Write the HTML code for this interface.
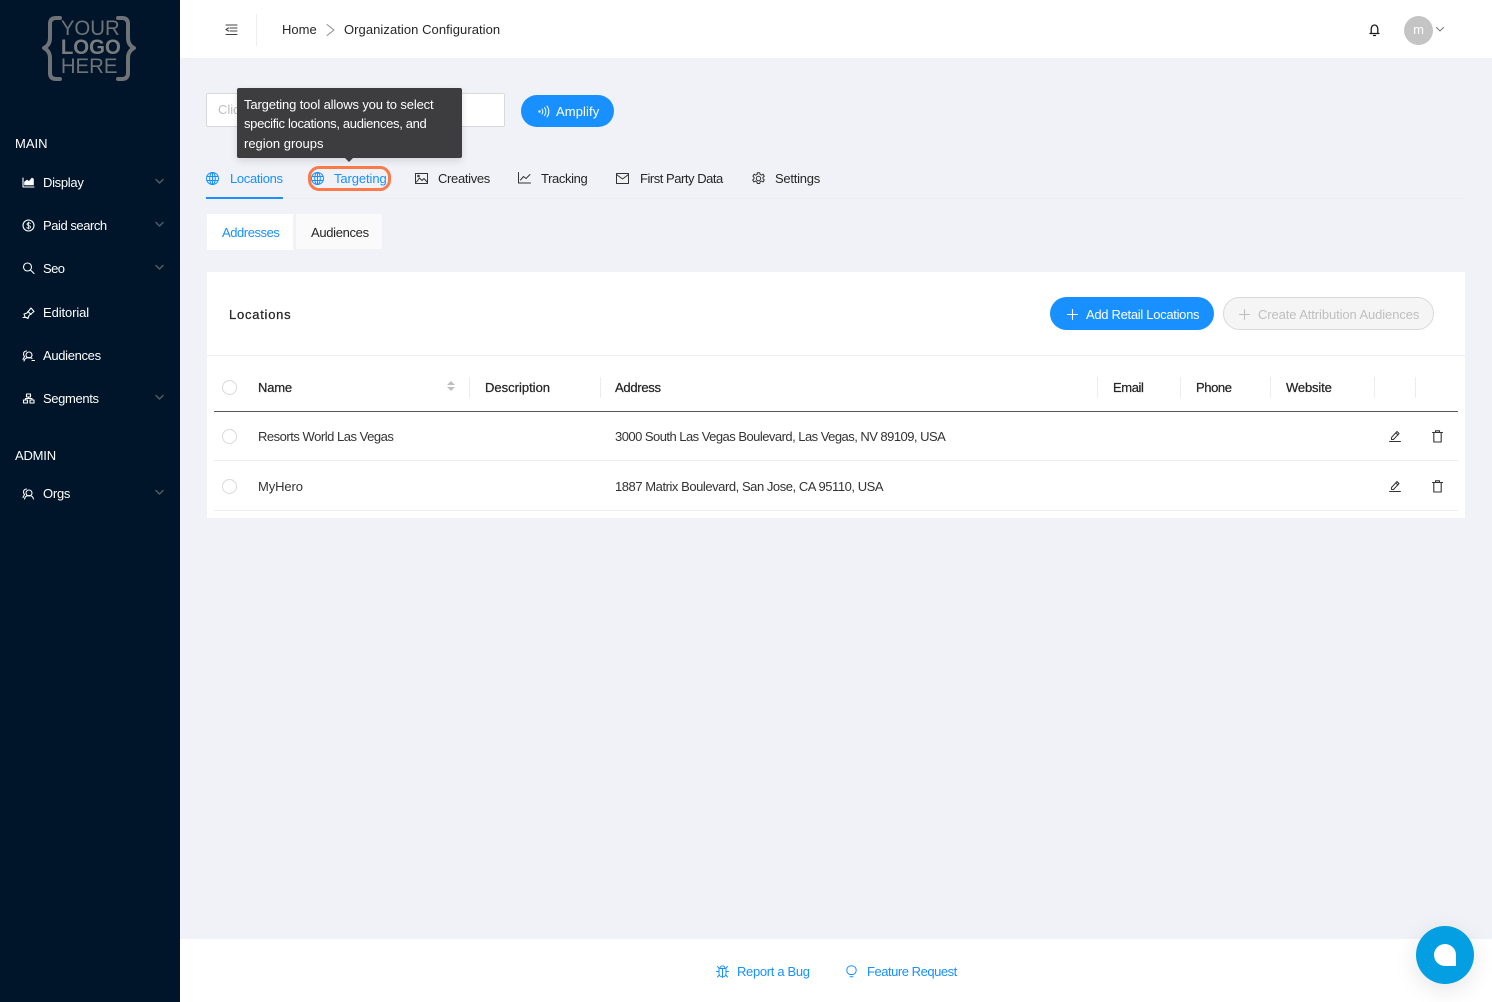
<!DOCTYPE html>
<html><head><meta charset="utf-8"><style>
html,body{margin:0;padding:0;width:1492px;height:1002px;overflow:hidden;background:#f0f2f7}
body{position:relative;font-family:"Liberation Sans","Noto Sans CJK SC",sans-serif;font-size:13px;color:#262626}
.a{position:absolute}
.t{position:absolute;white-space:nowrap;line-height:20px;height:20px}
.m{-webkit-text-stroke:.25px currentColor}
.w{color:#fff}.b{color:#1890ff}
svg{position:absolute;overflow:visible;fill:none;stroke-linecap:round;stroke-linejoin:round}
.s{width:1px;height:21px;background:#ededed;position:absolute;top:377px}
.r{position:absolute;width:13px;height:13px;border:1px solid #d9d9d9;border-radius:50%;left:222px;background:#fff}
.c{position:absolute;left:214px;width:1244px;height:1px;background:#ededed}
.l{width:56px;text-align:center;left:60px;color:#6f7276;font-size:21px;transform:scaleX(.97)}
</style></head><body>
<div class="a" style="left:0;top:0;width:180px;height:1002px;background:#00152a"></div>
<svg style="left:0;top:0" width="180" height="100" stroke="#6f7276" stroke-width="4"><path d="M60 18h-4c-4 0-6 2-6 6v14c0 5-2 8-6 10 4 2 6 5 6 10v15c0 4 2 6 6 6h4"/><path d="M118 18h4c4 0 6 2 6 6v14c0 5 2 8 6 10-4 2-6 5-6 10v15c0 4-2 6-6 6h-4"/></svg>
<div class="t l" style="top:19px">YOUR</div>
<div class="t l" style="top:38px;font-weight:bold;color:#7a7d80">LOGO</div>
<div class="t l" style="top:57px">HERE</div>

<div class="t w" style="left:15px;top:134px">MAIN</div>
<div class="t w" style="left:43px;top:173px;letter-spacing:-.3px">Display</div>
<div class="t w" style="left:43px;top:216px;letter-spacing:-.45px">Paid search</div>
<div class="t w" style="left:43px;top:259px;letter-spacing:-.6px">Seo</div>
<div class="t w" style="left:43px;top:303px;letter-spacing:-.1px">Editorial</div>
<div class="t w" style="left:43px;top:346px;letter-spacing:-.33px">Audiences</div>
<div class="t w" style="left:43px;top:389px;letter-spacing:-.37px">Segments</div>
<div class="t w" style="left:15px;top:446px;letter-spacing:-.2px">ADMIN</div>
<div class="t w" style="left:43px;top:484px;letter-spacing:-.25px">Orgs</div>
<svg style="left:0;top:0" width="180" height="510" stroke="#4d5b69" stroke-width="1.5"><path d="M156 179.500l3.500 3.500 3.500-3.500M156 222.500l3.500 3.500 3.500-3.500M156 265.500l3.500 3.500 3.500-3.500M156 395.500l3.500 3.500 3.500-3.500M156 490.500l3.500 3.500 3.500-3.500"/></svg>
<svg style="left:0;top:0" width="180" height="510" stroke="#fff" stroke-width="1.100">
<path d="M23 178v9h11" /><path d="M24.500 185v-3l2.500-2 2 1.500 3-3.500 1.500 1v6z" fill="#fff" stroke-width=".6"/>
<circle cx="28.500" cy="225.500" r="5.500"/><path d="M30.500 223.500c-1-1-3.500-.8-3.500.8 0 1.800 3.500 1 3.500 2.700 0 1.500-2.600 1.600-3.800.6M28.500 222v7" stroke-width=".8"/>
<circle cx="27.500" cy="267" r="4"/><path d="M30.500 270l3.500 3.500"/>
<path d="M23 317.500h4M24 314l3-1 4-5 3 3.500-5 4-1 3-3-1.500z"/><path d="M28 311.500l3 3"/>
<circle cx="29" cy="355" r="3"/><path d="M24 361c.5-2.500 2.500-3.500 5-3.500 1.300 0 2 .2 3 1M26.500 351c-2 .3-3 1.500-3 3 0 1 .4 2 1 2.500l-1.500 3M32 360.500h2.500"/>
<rect x="26.500" y="394" width="4" height="3"/><rect x="23.500" y="400" width="4" height="3"/><rect x="30" y="400" width="4" height="3"/><path d="M28.500 397v1.500h-3v1.500M28.500 398.500h3.500v1.500"/>
<circle cx="29" cy="493" r="3"/><path d="M24.500 499c.5-2.500 2-3.500 4.500-3.500s4 1 4.500 3.500M26.500 489c-2 .3-3 1.500-3 3 0 1 .4 2 1 2.500l-1.500 3"/>
</svg>

<div class="a" style="left:180px;top:0;width:1312px;height:58px;background:#fff"></div>
<svg style="left:225px;top:24px" width="13" height="12" stroke="#444" stroke-width="1.100"><path d="M1 1h11M5 4h7M5 7h7M1 10.500h11"/><path d="M3.500 4L1 5.500 3.500 7" /></svg>
<div class="a" style="left:256px;top:14px;width:1px;height:32px;background:#eee"></div>
<div class="t" style="left:282px;top:20px">Home</div>
<svg style="left:326px;top:24px" width="9" height="12" stroke="#8c8c8c" stroke-width="1"><path d="M1 .500l7 5.500-7 5.500"/></svg>
<div class="t" style="left:344px;top:20px;letter-spacing:.06px">Organization Configuration</div>
<svg style="left:1369px;top:23px" width="11" height="14" stroke="#1a1a1a" stroke-width="1.300"><path d="M1 10.500h9M2.200 10.500V6c0-2.200 1.300-4 3.300-4s3.300 1.800 3.300 4v4.500M4.500 12.500h2"/></svg>
<div class="a" style="left:1404px;top:16px;width:29px;height:29px;border-radius:50%;background:#c4c4c4"></div>
<div class="t w" style="left:1404px;top:20px;width:29px;text-align:center">m</div>
<svg style="left:1436px;top:27px" width="8" height="5" stroke="#777" stroke-width="1"><path d="M.500.500l3.500 3.500 3.500-3.500"/></svg>

<div class="a" style="left:206px;top:93px;width:297px;height:32px;background:#fff;border:1px solid #d9d9d9;border-radius:2px"></div>
<div class="t" style="left:218px;top:100px;color:#bfbfbf">Click-Through Link</div>
<div class="a" style="left:521px;top:95px;width:93px;height:32px;border-radius:16px;background:#1890ff"></div>
<svg style="left:538px;top:105px" width="11" height="13" stroke="#fff" stroke-width="1"><circle cx="1.500" cy="6.500" r=".7" fill="#fff"/><path d="M4 4c1 1.500 1 3.500 0 5M6.500 2.500c1.700 2.500 1.700 5.500 0 8M9 1c2.400 3.500 2.400 7.500 0 11"/></svg>
<div class="t w" style="left:556px;top:102px;letter-spacing:.1px">Amplify</div>

<div class="a" style="left:206px;top:198px;width:1260px;height:1px;background:#eceef2"></div>
<div class="a" style="left:206px;top:197px;width:77px;height:2px;background:#1890ff"></div>
<svg style="left:206px;top:172px" width="13" height="13" stroke="#1890ff" stroke-width="1"><circle cx="6.500" cy="6.500" r="6"/><ellipse cx="6.500" cy="6.500" rx="2.800" ry="6"/><path d="M1 4.500h11M1 8.500h11M6.500 .5v12"/></svg>
<div class="t b" style="left:230px;top:169px;letter-spacing:-.33px">Locations</div>
<div class="a" style="left:308px;top:166px;width:77px;height:19px;border:3px solid #fb7a4a;border-radius:11px"></div>
<svg style="left:311px;top:172px" width="13" height="13" stroke="#1890ff" stroke-width="1"><circle cx="6.500" cy="6.500" r="6"/><ellipse cx="6.500" cy="6.500" rx="2.800" ry="6"/><path d="M1 4.500h11M1 8.500h11M6.500 .5v12"/></svg>
<div class="t b" style="left:334px;top:169px;letter-spacing:-.1px">Targeting</div>
<svg style="left:415px;top:173px" width="13" height="11" stroke="#333" stroke-width="1"><rect x=".5" y=".5" width="12" height="10"/><path d="M1.500 9l3-4 2.500 2.500 2-2 3 3.500"/><circle cx="3.500" cy="3" r=".8"/></svg>
<div class="t" style="left:438px;top:169px;letter-spacing:-.33px">Creatives</div>
<svg style="left:518px;top:172px" width="13" height="12" stroke="#333" stroke-width="1"><path d="M.5.500v10.500h12M2.500 8l3-3.500 2.500 2 4-4"/></svg>
<div class="t" style="left:541px;top:169px;letter-spacing:-.38px">Tracking</div>
<svg style="left:616px;top:173px" width="13" height="11" stroke="#333" stroke-width="1"><rect x=".5" y=".5" width="12" height="10"/><path d="M.5 1.500l6 4.500 6-4.500"/></svg>
<div class="t" style="left:640px;top:169px;letter-spacing:-.47px">First Party Data</div>
<svg style="left:752px;top:172px" width="13" height="13" stroke="#333" stroke-width="1"><circle cx="6.500" cy="6.500" r="2.200"/><path d="M5.300.7h2.400l.4 1.700 1.500.7 1.500-.9 1.200 2-1.300 1.100v1.500l1.300 1.200-1.200 2-1.500-.9-1.500.7-.4 1.700H5.300l-.4-1.700-1.500-.7-1.500.9-1.200-2 1.300-1.200V5.300L.9 4.200l1.200-2 1.500.9 1.500-.7z"/></svg>
<div class="t" style="left:775px;top:169px;letter-spacing:-.25px">Settings</div>

<div class="a" style="left:207px;top:214px;width:86px;height:36px;background:#fff"></div>
<div class="a" style="left:296px;top:214px;width:86px;height:35px;background:#fafafa"></div>
<div class="t b" style="left:222px;top:223px;letter-spacing:-.44px">Addresses</div>
<div class="t" style="left:311px;top:223px;letter-spacing:-.33px">Audiences</div>

<div class="a" style="left:237px;top:88px;width:225px;height:70px;background:#3d3d3f;border-radius:2px;box-shadow:0 3px 8px rgba(0,0,0,.12)"></div>
<div class="a" style="left:345px;top:158px;width:0;height:0;border-left:4px solid transparent;border-right:4px solid transparent;border-top:4px solid #3d3d3f"></div>
<div class="t w" style="left:244px;top:95px;letter-spacing:-.14px">Targeting tool allows you to select</div>
<div class="t w" style="left:244px;top:114px;letter-spacing:-.33px">specific locations, audiences, and</div>
<div class="t w" style="left:244px;top:134px">region groups</div>

<div class="a" style="left:207px;top:272px;width:1258px;height:246px;background:#fff"></div>
<div class="t m" style="left:229px;top:305px;letter-spacing:.75px">Locations</div>
<div class="a" style="left:1050px;top:297px;width:164px;height:33px;border-radius:17px;background:#1890ff"></div>
<svg style="left:1067px;top:309px" width="11" height="11" stroke="#fff" stroke-width="1.100"><path d="M5.500.5v10M.5 5.500h10"/></svg>
<div class="t w" style="left:1086px;top:305px;letter-spacing:-.3px">Add Retail Locations</div>
<div class="a" style="left:1223px;top:297px;width:209px;height:31px;border:1px solid #d9d9d9;border-radius:17px;background:#f5f5f5"></div>
<svg style="left:1239px;top:309px" width="11" height="11" stroke="#bfbfbf" stroke-width="1.100"><path d="M5.500.5v10M.5 5.500h10"/></svg>
<div class="t" style="left:1258px;top:305px;color:#bfbfbf;letter-spacing:-.1px">Create Attribution Audiences</div>
<div class="a" style="left:207px;top:355px;width:1258px;height:1px;background:#f0f0f0"></div>

<div class="r" style="top:380px"></div>
<div class="t m" style="left:258px;top:378px;letter-spacing:-.2px">Name</div>
<div class="a" style="left:447px;top:381px;width:0;height:0;border-left:4px solid transparent;border-right:4px solid transparent;border-bottom:4px solid #bfbfbf"></div>
<div class="a" style="left:447px;top:387px;width:0;height:0;border-left:4px solid transparent;border-right:4px solid transparent;border-top:4px solid #bfbfbf"></div>
<div class="s" style="left:469px"></div><div class="s" style="left:600px"></div><div class="s" style="left:1097px"></div><div class="s" style="left:1180px"></div><div class="s" style="left:1270px"></div><div class="s" style="left:1374px"></div><div class="s" style="left:1415px"></div>
<div class="t m" style="left:485px;top:378px">Description</div>
<div class="t m" style="left:615px;top:378px;letter-spacing:-.28px">Address</div>
<div class="t m" style="left:1113px;top:378px;letter-spacing:-.4px">Email</div>
<div class="t m" style="left:1196px;top:378px;letter-spacing:-.4px">Phone</div>
<div class="t m" style="left:1286px;top:378px;letter-spacing:-.15px">Website</div>
<div class="a" style="left:214px;top:411px;width:1244px;height:1px;background:#595959"></div>

<div class="r" style="top:429px"></div>
<div class="t" style="left:258px;top:427px;color:#333;letter-spacing:-.48px">Resorts World Las Vegas</div>
<div class="t" style="left:615px;top:427px;color:#333;letter-spacing:-.53px">3000 South Las Vegas Boulevard, Las Vegas, NV 89109, USA</div>
<div class="c" style="top:460px"></div>
<div class="r" style="top:479px"></div>
<div class="t" style="left:258px;top:477px;color:#333;letter-spacing:-.1px">MyHero</div>
<div class="t" style="left:615px;top:477px;color:#333;letter-spacing:-.45px">1887 Matrix Boulevard, San Jose, CA 95110, USA</div>
<div class="c" style="top:510px"></div>

<svg style="left:1389px;top:430px" width="12" height="13" stroke="#333" stroke-width="1"><path d="M.5 11.500h11M2.500 9.500V7.500L8 1.500l2 2L4.500 9.500zM7 3l2 2"/></svg>
<svg style="left:1432px;top:430px" width="11" height="13" stroke="#333" stroke-width="1.100"><path d="M.5 2.500h10M3.500 2.500V.8h4v1.700M1.800 2.500v9.500h7.400V2.500"/></svg>
<svg style="left:1389px;top:480px" width="12" height="13" stroke="#333" stroke-width="1"><path d="M.5 11.500h11M2.500 9.500V7.500L8 1.500l2 2L4.500 9.500zM7 3l2 2"/></svg>
<svg style="left:1432px;top:480px" width="11" height="13" stroke="#333" stroke-width="1.100"><path d="M.5 2.500h10M3.500 2.500V.8h4v1.700M1.800 2.500v9.500h7.400V2.500"/></svg>

<div class="a" style="left:180px;top:939px;width:1312px;height:63px;background:#fff"></div>
<svg style="left:716px;top:965px" width="13" height="13" stroke="#1890ff" stroke-width="1"><path d="M4 3.500c0-3.500 5-3.500 5 0M3 3.500h7v5c0 4.500-7 4.500-7 0zM6.500 3.500v9M3 6.500H.5M10 6.500h2.500M3.500 3.500L1.500 1.500M9.500 3.500l2-2M3.300 10L1.500 12M9.700 10l1.800 2"/></svg>
<div class="t b" style="left:737px;top:962px;letter-spacing:-.33px">Report a Bug</div>
<svg style="left:846px;top:965px" width="11" height="13" stroke="#1890ff" stroke-width="1"><path d="M3.500 9.500C2 8.500 .8 7 .8 5.200.8 2.500 3 .7 5.500.7s4.700 1.800 4.700 4.500c0 1.800-1.200 3.300-2.700 4.300zM4 11.800h3"/></svg>
<div class="t b" style="left:867px;top:962px;letter-spacing:-.47px">Feature Request</div>

<div class="a" style="left:1416px;top:926px;width:58px;height:58px;border-radius:50%;background:#049fe3;box-shadow:0 6px 24px rgba(0,0,0,.1)"></div>
<div class="a" style="left:1434px;top:944px;width:22px;height:22px;background:#fff;border-radius:11px 11px 0 11px"></div>
</body></html>
